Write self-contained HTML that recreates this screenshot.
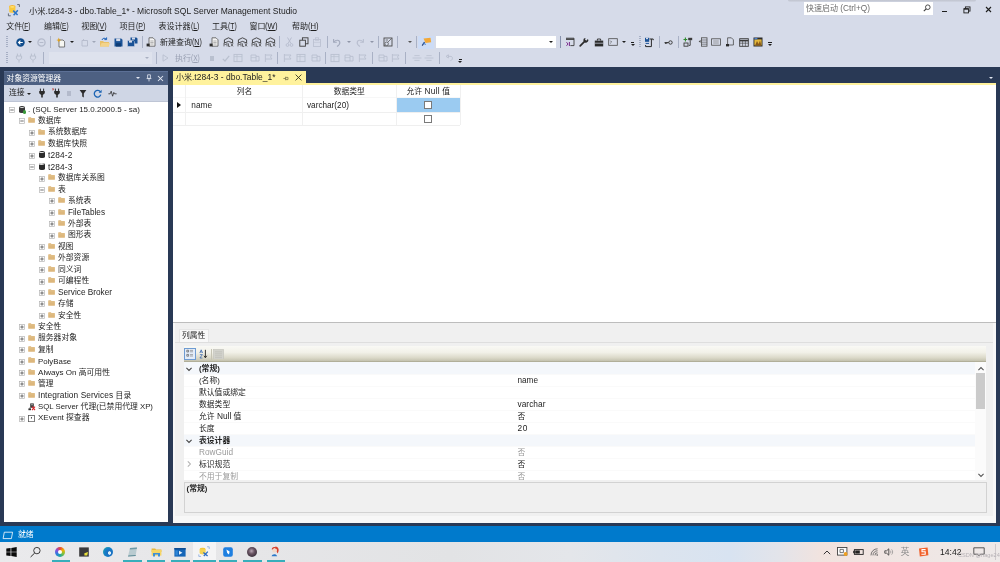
<!DOCTYPE html><html><head><meta charset="utf-8"><title>SSMS</title><style>
*{box-sizing:border-box;margin:0;padding:0}
html,body{width:1000px;height:562px;overflow:hidden;background:#D6DBE9;font-family:"Liberation Sans","Noto Sans CJK SC",sans-serif;font-size:7.8px;color:#1e1e1e}
.a{position:absolute}
.t{position:absolute;white-space:nowrap;line-height:12px;height:12px;z-index:2}
span.l{line-height:0}
#root{position:absolute;left:0;top:0;width:1000px;height:562px;overflow:hidden;will-change:transform;background:#D6DBE9}
#navy{left:0;top:66.8px;width:1000px;height:460.2px;background:#293955}
#status{left:0;top:526.4px;width:1000px;height:15.5px;background:#007ACC}
#taskbar{left:0;top:541.9px;width:1000px;height:20px;background:linear-gradient(90deg,#EAEAEC 0,#E6E6E8 25%,#E2E3E5 45%,#E4E6EA 57%,#DCE4EE 66%,#D8E3F1 73%,#E3E4EA 78%,#F1E3DF 82%,#F0E5E2 88%,#EEE9E8 100%)}
#oe{left:4.3px;top:71px;width:164.2px;height:451.4px;background:#fff}
#oetitle{left:4.3px;top:71px;width:164.2px;height:13.5px;background:#4D6082;border-top:0.7px solid #5C7096}
#oetb{left:4.3px;top:84.5px;width:164.2px;height:17.9px;background:#CFD6E5;border-bottom:0.8px solid #BEC5D5}
#doc{left:173px;top:84px;width:823px;height:438.6px;background:#fff}
#tab{left:173px;top:70.8px;width:133px;height:14px;background:#FFF29D}
#tabline{left:173px;top:83px;width:823px;height:1.5px;background:#FFF29D}
#propsbg{left:173px;top:322px;width:823px;height:200.6px;background:#F7F7F7;border-top:1px solid #bdbdbd}
#props{left:175px;top:323px;width:818px;height:193px;background:#F0F0F0}
</style></head><body><div id="root">
<div class="a" id="navy"></div>
<div class="a" id="oe"></div><div class="a" id="oetitle"></div><div class="a" id="oetb"></div>
<div class="a" id="doc"></div><div class="a" id="tab"></div><div class="a" id="tabline"></div>
<div class="a" id="propsbg"></div><div class="a" id="props"></div>
<div class="a" id="status"></div><div class="a" id="taskbar"></div>
<div class="t " id="t1" style="left:29px;top:5.300000000000001px;font-size:8.3px;color:#1e1e1e">小米<span class="l" style="font-size:1.028em;letter-spacing:0.006px;">.t284-3 - dbo.Table_1* - Microsoft SQL Server Management Studio</span></div>
<div class="t " id="t2" style="left:6.2px;top:20.9px;font-size:8px">文件<span class="l" style="font-size:1.08em;display:inline-block;transform:scaleX(0.761);transform-origin:0 50%;">(<u>F</u>)</span></div>
<div class="t " id="t3" style="left:44px;top:20.9px;font-size:8px">编辑<span class="l" style="font-size:1.08em;display:inline-block;transform:scaleX(0.738);transform-origin:0 50%;">(<u>E</u>)</span></div>
<div class="t " id="t4" style="left:81.2px;top:20.9px;font-size:8px">视图<span class="l" style="font-size:1.08em;display:inline-block;transform:scaleX(0.842);transform-origin:0 50%;">(<u>V</u>)</span></div>
<div class="t " id="t5" style="left:119.6px;top:20.9px;font-size:8px">项目<span class="l" style="font-size:1.08em;display:inline-block;transform:scaleX(0.816);transform-origin:0 50%;">(<u>P</u>)</span></div>
<div class="t " id="t6" style="left:158.5px;top:20.9px;font-size:8px">表设计器<span class="l" style="font-size:1.08em;display:inline-block;transform:scaleX(0.787);transform-origin:0 50%;">(<u>L</u>)</span></div>
<div class="t " id="t7" style="left:211.9px;top:20.9px;font-size:8px">工具<span class="l" style="font-size:1.08em;display:inline-block;transform:scaleX(0.789);transform-origin:0 50%;">(<u>T</u>)</span></div>
<div class="t " id="t8" style="left:249.4px;top:20.9px;font-size:8px">窗口<span class="l" style="font-size:1.08em;display:inline-block;transform:scaleX(0.906);transform-origin:0 50%;">(<u>W</u>)</span></div>
<div class="t " id="t9" style="left:291.9px;top:20.9px;font-size:8px">帮助<span class="l" style="font-size:1.08em;display:inline-block;transform:scaleX(0.884);transform-origin:0 50%;">(<u>H</u>)</span></div>
<div class="t " id="t10" style="left:160px;top:37px;font-size:8px">新建查询<span class="l" style="font-size:1.08em;display:inline-block;transform:scaleX(0.826);transform-origin:0 50%;">(<u>N</u>)</span></div>
<div class="t " id="t11" style="left:175px;top:52.5px;font-size:8px;color:#9aa1b3">执行<span class="l" style="font-size:1.08em;display:inline-block;transform:scaleX(0.764);transform-origin:0 50%;">(<u>X</u>)</span></div>
<div class="t " id="t12" style="left:806px;top:3px;font-size:8px;color:#6d6d6d">快速启动<span class="l" style="font-size:1.036em;letter-spacing:0.009px;"> (Ctrl+Q)</span></div>
<svg class="a" style="left:8.5px;top:106.90px" width="6" height="6" viewBox="0 0 6 6"><rect x="0.4" y="0.4" width="5.2" height="5.2" fill="#fff" stroke="#B4B4B4" stroke-width="0.7"/><path d="M1.3 3 H4.7" stroke="#555" stroke-width="0.85"/></svg>
<div class="a" style="left:19px;top:106.10px;width:6px;height:7px;background:#3a3a3a;border-radius:2.5px/1.5px"></div>
<div class="a" style="left:19.8px;top:106.60px;width:4.4px;height:1.4px;background:#ddd;border-radius:50%"></div>
<div class="a" style="left:22.5px;top:110.10px;width:3.5px;height:3.5px;background:#3A9A3A;border-radius:50%"></div>
<div class="t " id="t13" style="left:28px;top:104.4px;"><span class="l" style="font-size:1.032em;letter-spacing:0.008px;">. (SQL Server 15.0.2000.5 - sa)</span></div>
<svg class="a" style="left:18.5px;top:118.34px" width="6" height="6" viewBox="0 0 6 6"><rect x="0.4" y="0.4" width="5.2" height="5.2" fill="#fff" stroke="#B4B4B4" stroke-width="0.7"/><path d="M1.3 3 H4.7" stroke="#555" stroke-width="0.85"/></svg>
<svg class="a" style="left:28.1px;top:117.14px" width="7" height="6" viewBox="0 0 7 6"><path d="M0.2 0.9 Q0.2 0.3 0.8 0.3 H2.8 L3.5 1 H6.4 Q6.9 1 6.9 1.5 V5.3 Q6.9 5.8 6.4 5.8 H0.7 Q0.2 5.8 0.2 5.3 Z" fill="#DDB77C"/><path d="M0.2 1.9 H6.9" stroke="#E8CC9C" stroke-width="0.5"/></svg>
<div class="t " id="t14" style="left:38px;top:115.04px;">数据库</div>
<svg class="a" style="left:28.5px;top:129.78px" width="6" height="6" viewBox="0 0 6 6"><rect x="0.4" y="0.4" width="5.2" height="5.2" fill="#fff" stroke="#B4B4B4" stroke-width="0.7"/><path d="M1.3 3 H4.7" stroke="#555" stroke-width="0.85"/><path d="M3 1.3 V4.7" stroke="#555" stroke-width="0.85"/></svg>
<svg class="a" style="left:38.1px;top:128.58px" width="7" height="6" viewBox="0 0 7 6"><path d="M0.2 0.9 Q0.2 0.3 0.8 0.3 H2.8 L3.5 1 H6.4 Q6.9 1 6.9 1.5 V5.3 Q6.9 5.8 6.4 5.8 H0.7 Q0.2 5.8 0.2 5.3 Z" fill="#DDB77C"/><path d="M0.2 1.9 H6.9" stroke="#E8CC9C" stroke-width="0.5"/></svg>
<div class="t " id="t15" style="left:48px;top:126.47999999999999px;">系统数据库</div>
<svg class="a" style="left:28.5px;top:141.22px" width="6" height="6" viewBox="0 0 6 6"><rect x="0.4" y="0.4" width="5.2" height="5.2" fill="#fff" stroke="#B4B4B4" stroke-width="0.7"/><path d="M1.3 3 H4.7" stroke="#555" stroke-width="0.85"/><path d="M3 1.3 V4.7" stroke="#555" stroke-width="0.85"/></svg>
<svg class="a" style="left:38.1px;top:140.02px" width="7" height="6" viewBox="0 0 7 6"><path d="M0.2 0.9 Q0.2 0.3 0.8 0.3 H2.8 L3.5 1 H6.4 Q6.9 1 6.9 1.5 V5.3 Q6.9 5.8 6.4 5.8 H0.7 Q0.2 5.8 0.2 5.3 Z" fill="#DDB77C"/><path d="M0.2 1.9 H6.9" stroke="#E8CC9C" stroke-width="0.5"/></svg>
<div class="t " id="t16" style="left:48px;top:137.92px;">数据库快照</div>
<svg class="a" style="left:28.5px;top:152.66px" width="6" height="6" viewBox="0 0 6 6"><rect x="0.4" y="0.4" width="5.2" height="5.2" fill="#fff" stroke="#B4B4B4" stroke-width="0.7"/><path d="M1.3 3 H4.7" stroke="#555" stroke-width="0.85"/><path d="M3 1.3 V4.7" stroke="#555" stroke-width="0.85"/></svg>
<div class="a" style="left:38.5px;top:151.36px;width:6px;height:7px;background:#2b2b2b;border-radius:2.5px/1.5px"></div>
<div class="a" style="left:39.3px;top:151.86px;width:4.4px;height:1.4px;background:#ddd;border-radius:50%"></div>
<div class="t " id="t17" style="left:48px;top:150.16px;"><span class="l" style="font-size:1.070em;letter-spacing:0.146px;">t284-2</span></div>
<svg class="a" style="left:28.5px;top:164.10px" width="6" height="6" viewBox="0 0 6 6"><rect x="0.4" y="0.4" width="5.2" height="5.2" fill="#fff" stroke="#B4B4B4" stroke-width="0.7"/><path d="M1.3 3 H4.7" stroke="#555" stroke-width="0.85"/></svg>
<div class="a" style="left:38.5px;top:162.80px;width:6px;height:7px;background:#2b2b2b;border-radius:2.5px/1.5px"></div>
<div class="a" style="left:39.3px;top:163.30px;width:4.4px;height:1.4px;background:#ddd;border-radius:50%"></div>
<div class="t " id="t18" style="left:48px;top:161.6px;"><span class="l" style="font-size:1.070em;letter-spacing:0.146px;">t284-3</span></div>
<svg class="a" style="left:38.5px;top:175.54px" width="6" height="6" viewBox="0 0 6 6"><rect x="0.4" y="0.4" width="5.2" height="5.2" fill="#fff" stroke="#B4B4B4" stroke-width="0.7"/><path d="M1.3 3 H4.7" stroke="#555" stroke-width="0.85"/><path d="M3 1.3 V4.7" stroke="#555" stroke-width="0.85"/></svg>
<svg class="a" style="left:48.1px;top:174.34px" width="7" height="6" viewBox="0 0 7 6"><path d="M0.2 0.9 Q0.2 0.3 0.8 0.3 H2.8 L3.5 1 H6.4 Q6.9 1 6.9 1.5 V5.3 Q6.9 5.8 6.4 5.8 H0.7 Q0.2 5.8 0.2 5.3 Z" fill="#DDB77C"/><path d="M0.2 1.9 H6.9" stroke="#E8CC9C" stroke-width="0.5"/></svg>
<div class="t " id="t19" style="left:58px;top:172.24px;">数据库关系图</div>
<svg class="a" style="left:38.5px;top:186.98px" width="6" height="6" viewBox="0 0 6 6"><rect x="0.4" y="0.4" width="5.2" height="5.2" fill="#fff" stroke="#B4B4B4" stroke-width="0.7"/><path d="M1.3 3 H4.7" stroke="#555" stroke-width="0.85"/></svg>
<svg class="a" style="left:48.1px;top:185.78px" width="7" height="6" viewBox="0 0 7 6"><path d="M0.2 0.9 Q0.2 0.3 0.8 0.3 H2.8 L3.5 1 H6.4 Q6.9 1 6.9 1.5 V5.3 Q6.9 5.8 6.4 5.8 H0.7 Q0.2 5.8 0.2 5.3 Z" fill="#DDB77C"/><path d="M0.2 1.9 H6.9" stroke="#E8CC9C" stroke-width="0.5"/></svg>
<div class="t " id="t20" style="left:58px;top:183.68px;">表</div>
<svg class="a" style="left:48.5px;top:198.42px" width="6" height="6" viewBox="0 0 6 6"><rect x="0.4" y="0.4" width="5.2" height="5.2" fill="#fff" stroke="#B4B4B4" stroke-width="0.7"/><path d="M1.3 3 H4.7" stroke="#555" stroke-width="0.85"/><path d="M3 1.3 V4.7" stroke="#555" stroke-width="0.85"/></svg>
<svg class="a" style="left:58.1px;top:197.22px" width="7" height="6" viewBox="0 0 7 6"><path d="M0.2 0.9 Q0.2 0.3 0.8 0.3 H2.8 L3.5 1 H6.4 Q6.9 1 6.9 1.5 V5.3 Q6.9 5.8 6.4 5.8 H0.7 Q0.2 5.8 0.2 5.3 Z" fill="#DDB77C"/><path d="M0.2 1.9 H6.9" stroke="#E8CC9C" stroke-width="0.5"/></svg>
<div class="t " id="t21" style="left:68px;top:195.12px;">系统表</div>
<svg class="a" style="left:48.5px;top:209.86px" width="6" height="6" viewBox="0 0 6 6"><rect x="0.4" y="0.4" width="5.2" height="5.2" fill="#fff" stroke="#B4B4B4" stroke-width="0.7"/><path d="M1.3 3 H4.7" stroke="#555" stroke-width="0.85"/><path d="M3 1.3 V4.7" stroke="#555" stroke-width="0.85"/></svg>
<svg class="a" style="left:58.1px;top:208.66px" width="7" height="6" viewBox="0 0 7 6"><path d="M0.2 0.9 Q0.2 0.3 0.8 0.3 H2.8 L3.5 1 H6.4 Q6.9 1 6.9 1.5 V5.3 Q6.9 5.8 6.4 5.8 H0.7 Q0.2 5.8 0.2 5.3 Z" fill="#DDB77C"/><path d="M0.2 1.9 H6.9" stroke="#E8CC9C" stroke-width="0.5"/></svg>
<div class="t " id="t22" style="left:68px;top:207.36px;"><span class="l" style="font-size:1.054em;">FileTables</span></div>
<svg class="a" style="left:48.5px;top:221.30px" width="6" height="6" viewBox="0 0 6 6"><rect x="0.4" y="0.4" width="5.2" height="5.2" fill="#fff" stroke="#B4B4B4" stroke-width="0.7"/><path d="M1.3 3 H4.7" stroke="#555" stroke-width="0.85"/><path d="M3 1.3 V4.7" stroke="#555" stroke-width="0.85"/></svg>
<svg class="a" style="left:58.1px;top:220.10px" width="7" height="6" viewBox="0 0 7 6"><path d="M0.2 0.9 Q0.2 0.3 0.8 0.3 H2.8 L3.5 1 H6.4 Q6.9 1 6.9 1.5 V5.3 Q6.9 5.8 6.4 5.8 H0.7 Q0.2 5.8 0.2 5.3 Z" fill="#DDB77C"/><path d="M0.2 1.9 H6.9" stroke="#E8CC9C" stroke-width="0.5"/></svg>
<div class="t " id="t23" style="left:68px;top:218.0px;">外部表</div>
<svg class="a" style="left:48.5px;top:232.74px" width="6" height="6" viewBox="0 0 6 6"><rect x="0.4" y="0.4" width="5.2" height="5.2" fill="#fff" stroke="#B4B4B4" stroke-width="0.7"/><path d="M1.3 3 H4.7" stroke="#555" stroke-width="0.85"/><path d="M3 1.3 V4.7" stroke="#555" stroke-width="0.85"/></svg>
<svg class="a" style="left:58.1px;top:231.54px" width="7" height="6" viewBox="0 0 7 6"><path d="M0.2 0.9 Q0.2 0.3 0.8 0.3 H2.8 L3.5 1 H6.4 Q6.9 1 6.9 1.5 V5.3 Q6.9 5.8 6.4 5.8 H0.7 Q0.2 5.8 0.2 5.3 Z" fill="#DDB77C"/><path d="M0.2 1.9 H6.9" stroke="#E8CC9C" stroke-width="0.5"/></svg>
<div class="t " id="t24" style="left:68px;top:229.44px;">图形表</div>
<svg class="a" style="left:38.5px;top:244.18px" width="6" height="6" viewBox="0 0 6 6"><rect x="0.4" y="0.4" width="5.2" height="5.2" fill="#fff" stroke="#B4B4B4" stroke-width="0.7"/><path d="M1.3 3 H4.7" stroke="#555" stroke-width="0.85"/><path d="M3 1.3 V4.7" stroke="#555" stroke-width="0.85"/></svg>
<svg class="a" style="left:48.1px;top:242.98px" width="7" height="6" viewBox="0 0 7 6"><path d="M0.2 0.9 Q0.2 0.3 0.8 0.3 H2.8 L3.5 1 H6.4 Q6.9 1 6.9 1.5 V5.3 Q6.9 5.8 6.4 5.8 H0.7 Q0.2 5.8 0.2 5.3 Z" fill="#DDB77C"/><path d="M0.2 1.9 H6.9" stroke="#E8CC9C" stroke-width="0.5"/></svg>
<div class="t " id="t25" style="left:58px;top:240.88px;">视图</div>
<svg class="a" style="left:38.5px;top:255.62px" width="6" height="6" viewBox="0 0 6 6"><rect x="0.4" y="0.4" width="5.2" height="5.2" fill="#fff" stroke="#B4B4B4" stroke-width="0.7"/><path d="M1.3 3 H4.7" stroke="#555" stroke-width="0.85"/><path d="M3 1.3 V4.7" stroke="#555" stroke-width="0.85"/></svg>
<svg class="a" style="left:48.1px;top:254.42px" width="7" height="6" viewBox="0 0 7 6"><path d="M0.2 0.9 Q0.2 0.3 0.8 0.3 H2.8 L3.5 1 H6.4 Q6.9 1 6.9 1.5 V5.3 Q6.9 5.8 6.4 5.8 H0.7 Q0.2 5.8 0.2 5.3 Z" fill="#DDB77C"/><path d="M0.2 1.9 H6.9" stroke="#E8CC9C" stroke-width="0.5"/></svg>
<div class="t " id="t26" style="left:58px;top:252.32px;">外部资源</div>
<svg class="a" style="left:38.5px;top:267.06px" width="6" height="6" viewBox="0 0 6 6"><rect x="0.4" y="0.4" width="5.2" height="5.2" fill="#fff" stroke="#B4B4B4" stroke-width="0.7"/><path d="M1.3 3 H4.7" stroke="#555" stroke-width="0.85"/><path d="M3 1.3 V4.7" stroke="#555" stroke-width="0.85"/></svg>
<svg class="a" style="left:48.1px;top:265.86px" width="7" height="6" viewBox="0 0 7 6"><path d="M0.2 0.9 Q0.2 0.3 0.8 0.3 H2.8 L3.5 1 H6.4 Q6.9 1 6.9 1.5 V5.3 Q6.9 5.8 6.4 5.8 H0.7 Q0.2 5.8 0.2 5.3 Z" fill="#DDB77C"/><path d="M0.2 1.9 H6.9" stroke="#E8CC9C" stroke-width="0.5"/></svg>
<div class="t " id="t27" style="left:58px;top:263.76px;">同义词</div>
<svg class="a" style="left:38.5px;top:278.50px" width="6" height="6" viewBox="0 0 6 6"><rect x="0.4" y="0.4" width="5.2" height="5.2" fill="#fff" stroke="#B4B4B4" stroke-width="0.7"/><path d="M1.3 3 H4.7" stroke="#555" stroke-width="0.85"/><path d="M3 1.3 V4.7" stroke="#555" stroke-width="0.85"/></svg>
<svg class="a" style="left:48.1px;top:277.30px" width="7" height="6" viewBox="0 0 7 6"><path d="M0.2 0.9 Q0.2 0.3 0.8 0.3 H2.8 L3.5 1 H6.4 Q6.9 1 6.9 1.5 V5.3 Q6.9 5.8 6.4 5.8 H0.7 Q0.2 5.8 0.2 5.3 Z" fill="#DDB77C"/><path d="M0.2 1.9 H6.9" stroke="#E8CC9C" stroke-width="0.5"/></svg>
<div class="t " id="t28" style="left:58px;top:275.2px;">可编程性</div>
<svg class="a" style="left:38.5px;top:289.94px" width="6" height="6" viewBox="0 0 6 6"><rect x="0.4" y="0.4" width="5.2" height="5.2" fill="#fff" stroke="#B4B4B4" stroke-width="0.7"/><path d="M1.3 3 H4.7" stroke="#555" stroke-width="0.85"/><path d="M3 1.3 V4.7" stroke="#555" stroke-width="0.85"/></svg>
<svg class="a" style="left:48.1px;top:288.74px" width="7" height="6" viewBox="0 0 7 6"><path d="M0.2 0.9 Q0.2 0.3 0.8 0.3 H2.8 L3.5 1 H6.4 Q6.9 1 6.9 1.5 V5.3 Q6.9 5.8 6.4 5.8 H0.7 Q0.2 5.8 0.2 5.3 Z" fill="#DDB77C"/><path d="M0.2 1.9 H6.9" stroke="#E8CC9C" stroke-width="0.5"/></svg>
<div class="t " id="t29" style="left:58px;top:287.44px;"><span class="l" style="font-size:1.056em;letter-spacing:0.007px;">Service Broker</span></div>
<svg class="a" style="left:38.5px;top:301.38px" width="6" height="6" viewBox="0 0 6 6"><rect x="0.4" y="0.4" width="5.2" height="5.2" fill="#fff" stroke="#B4B4B4" stroke-width="0.7"/><path d="M1.3 3 H4.7" stroke="#555" stroke-width="0.85"/><path d="M3 1.3 V4.7" stroke="#555" stroke-width="0.85"/></svg>
<svg class="a" style="left:48.1px;top:300.18px" width="7" height="6" viewBox="0 0 7 6"><path d="M0.2 0.9 Q0.2 0.3 0.8 0.3 H2.8 L3.5 1 H6.4 Q6.9 1 6.9 1.5 V5.3 Q6.9 5.8 6.4 5.8 H0.7 Q0.2 5.8 0.2 5.3 Z" fill="#DDB77C"/><path d="M0.2 1.9 H6.9" stroke="#E8CC9C" stroke-width="0.5"/></svg>
<div class="t " id="t30" style="left:58px;top:298.08px;">存储</div>
<svg class="a" style="left:38.5px;top:312.82px" width="6" height="6" viewBox="0 0 6 6"><rect x="0.4" y="0.4" width="5.2" height="5.2" fill="#fff" stroke="#B4B4B4" stroke-width="0.7"/><path d="M1.3 3 H4.7" stroke="#555" stroke-width="0.85"/><path d="M3 1.3 V4.7" stroke="#555" stroke-width="0.85"/></svg>
<svg class="a" style="left:48.1px;top:311.62px" width="7" height="6" viewBox="0 0 7 6"><path d="M0.2 0.9 Q0.2 0.3 0.8 0.3 H2.8 L3.5 1 H6.4 Q6.9 1 6.9 1.5 V5.3 Q6.9 5.8 6.4 5.8 H0.7 Q0.2 5.8 0.2 5.3 Z" fill="#DDB77C"/><path d="M0.2 1.9 H6.9" stroke="#E8CC9C" stroke-width="0.5"/></svg>
<div class="t " id="t31" style="left:58px;top:309.52px;">安全性</div>
<svg class="a" style="left:18.5px;top:324.26px" width="6" height="6" viewBox="0 0 6 6"><rect x="0.4" y="0.4" width="5.2" height="5.2" fill="#fff" stroke="#B4B4B4" stroke-width="0.7"/><path d="M1.3 3 H4.7" stroke="#555" stroke-width="0.85"/><path d="M3 1.3 V4.7" stroke="#555" stroke-width="0.85"/></svg>
<svg class="a" style="left:28.1px;top:323.06px" width="7" height="6" viewBox="0 0 7 6"><path d="M0.2 0.9 Q0.2 0.3 0.8 0.3 H2.8 L3.5 1 H6.4 Q6.9 1 6.9 1.5 V5.3 Q6.9 5.8 6.4 5.8 H0.7 Q0.2 5.8 0.2 5.3 Z" fill="#DDB77C"/><path d="M0.2 1.9 H6.9" stroke="#E8CC9C" stroke-width="0.5"/></svg>
<div class="t " id="t32" style="left:38px;top:320.96px;">安全性</div>
<svg class="a" style="left:18.5px;top:335.70px" width="6" height="6" viewBox="0 0 6 6"><rect x="0.4" y="0.4" width="5.2" height="5.2" fill="#fff" stroke="#B4B4B4" stroke-width="0.7"/><path d="M1.3 3 H4.7" stroke="#555" stroke-width="0.85"/><path d="M3 1.3 V4.7" stroke="#555" stroke-width="0.85"/></svg>
<svg class="a" style="left:28.1px;top:334.50px" width="7" height="6" viewBox="0 0 7 6"><path d="M0.2 0.9 Q0.2 0.3 0.8 0.3 H2.8 L3.5 1 H6.4 Q6.9 1 6.9 1.5 V5.3 Q6.9 5.8 6.4 5.8 H0.7 Q0.2 5.8 0.2 5.3 Z" fill="#DDB77C"/><path d="M0.2 1.9 H6.9" stroke="#E8CC9C" stroke-width="0.5"/></svg>
<div class="t " id="t33" style="left:38px;top:332.4px;">服务器对象</div>
<svg class="a" style="left:18.5px;top:347.14px" width="6" height="6" viewBox="0 0 6 6"><rect x="0.4" y="0.4" width="5.2" height="5.2" fill="#fff" stroke="#B4B4B4" stroke-width="0.7"/><path d="M1.3 3 H4.7" stroke="#555" stroke-width="0.85"/><path d="M3 1.3 V4.7" stroke="#555" stroke-width="0.85"/></svg>
<svg class="a" style="left:28.1px;top:345.94px" width="7" height="6" viewBox="0 0 7 6"><path d="M0.2 0.9 Q0.2 0.3 0.8 0.3 H2.8 L3.5 1 H6.4 Q6.9 1 6.9 1.5 V5.3 Q6.9 5.8 6.4 5.8 H0.7 Q0.2 5.8 0.2 5.3 Z" fill="#DDB77C"/><path d="M0.2 1.9 H6.9" stroke="#E8CC9C" stroke-width="0.5"/></svg>
<div class="t " id="t34" style="left:38px;top:343.84px;">复制</div>
<svg class="a" style="left:18.5px;top:358.58px" width="6" height="6" viewBox="0 0 6 6"><rect x="0.4" y="0.4" width="5.2" height="5.2" fill="#fff" stroke="#B4B4B4" stroke-width="0.7"/><path d="M1.3 3 H4.7" stroke="#555" stroke-width="0.85"/><path d="M3 1.3 V4.7" stroke="#555" stroke-width="0.85"/></svg>
<svg class="a" style="left:28.1px;top:357.38px" width="7" height="6" viewBox="0 0 7 6"><path d="M0.2 0.9 Q0.2 0.3 0.8 0.3 H2.8 L3.5 1 H6.4 Q6.9 1 6.9 1.5 V5.3 Q6.9 5.8 6.4 5.8 H0.7 Q0.2 5.8 0.2 5.3 Z" fill="#DDB77C"/><path d="M0.2 1.9 H6.9" stroke="#E8CC9C" stroke-width="0.5"/></svg>
<div class="t " id="t35" style="left:38px;top:356.08px;"><span class="l" style="font-size:1.007em;letter-spacing:0.007px;">PolyBase</span></div>
<svg class="a" style="left:18.5px;top:370.02px" width="6" height="6" viewBox="0 0 6 6"><rect x="0.4" y="0.4" width="5.2" height="5.2" fill="#fff" stroke="#B4B4B4" stroke-width="0.7"/><path d="M1.3 3 H4.7" stroke="#555" stroke-width="0.85"/><path d="M3 1.3 V4.7" stroke="#555" stroke-width="0.85"/></svg>
<svg class="a" style="left:28.1px;top:368.82px" width="7" height="6" viewBox="0 0 7 6"><path d="M0.2 0.9 Q0.2 0.3 0.8 0.3 H2.8 L3.5 1 H6.4 Q6.9 1 6.9 1.5 V5.3 Q6.9 5.8 6.4 5.8 H0.7 Q0.2 5.8 0.2 5.3 Z" fill="#DDB77C"/><path d="M0.2 1.9 H6.9" stroke="#E8CC9C" stroke-width="0.5"/></svg>
<div class="t " id="t36" style="left:38px;top:366.72px;"><span class="l" style="font-size:1.035em;">Always On </span>高可用性</div>
<svg class="a" style="left:18.5px;top:381.46px" width="6" height="6" viewBox="0 0 6 6"><rect x="0.4" y="0.4" width="5.2" height="5.2" fill="#fff" stroke="#B4B4B4" stroke-width="0.7"/><path d="M1.3 3 H4.7" stroke="#555" stroke-width="0.85"/><path d="M3 1.3 V4.7" stroke="#555" stroke-width="0.85"/></svg>
<svg class="a" style="left:28.1px;top:380.26px" width="7" height="6" viewBox="0 0 7 6"><path d="M0.2 0.9 Q0.2 0.3 0.8 0.3 H2.8 L3.5 1 H6.4 Q6.9 1 6.9 1.5 V5.3 Q6.9 5.8 6.4 5.8 H0.7 Q0.2 5.8 0.2 5.3 Z" fill="#DDB77C"/><path d="M0.2 1.9 H6.9" stroke="#E8CC9C" stroke-width="0.5"/></svg>
<div class="t " id="t37" style="left:38px;top:378.16px;">管理</div>
<svg class="a" style="left:18.5px;top:392.90px" width="6" height="6" viewBox="0 0 6 6"><rect x="0.4" y="0.4" width="5.2" height="5.2" fill="#fff" stroke="#B4B4B4" stroke-width="0.7"/><path d="M1.3 3 H4.7" stroke="#555" stroke-width="0.85"/><path d="M3 1.3 V4.7" stroke="#555" stroke-width="0.85"/></svg>
<svg class="a" style="left:28.1px;top:391.70px" width="7" height="6" viewBox="0 0 7 6"><path d="M0.2 0.9 Q0.2 0.3 0.8 0.3 H2.8 L3.5 1 H6.4 Q6.9 1 6.9 1.5 V5.3 Q6.9 5.8 6.4 5.8 H0.7 Q0.2 5.8 0.2 5.3 Z" fill="#DDB77C"/><path d="M0.2 1.9 H6.9" stroke="#E8CC9C" stroke-width="0.5"/></svg>
<div class="t " id="t38" style="left:38px;top:389.6px;"><span class="l" style="font-size:1.070em;letter-spacing:0.080px;">Integration Services </span>目录</div>
<svg class="a" style="left:27.9px;top:403.44px" width="8" height="8" viewBox="0 0 8 8"><rect x="2.2" y="0.4" width="3.6" height="4.4" fill="#3a3a3a"/><rect x="3" y="1.1" width="2" height="1.2" fill="#9a9a9a"/><path d="M0.4 5.4 H3 V7.2 H0.4 Z" fill="#333"/><path d="M1.7 4.6 V5.6" stroke="#333" stroke-width="0.7"/><path d="M4 3.6 L7 7.2 M7 3.6 L4 7.2" stroke="#D8282C" stroke-width="1.1"/></svg>
<div class="t " id="t39" style="left:38px;top:401.04px;"><span class="l" style="">SQL Server </span>代理<span class="l" style="">(</span>已禁用代理<span class="l" style=""> XP)</span></div>
<svg class="a" style="left:18.5px;top:415.78px" width="6" height="6" viewBox="0 0 6 6"><rect x="0.4" y="0.4" width="5.2" height="5.2" fill="#fff" stroke="#B4B4B4" stroke-width="0.7"/><path d="M1.3 3 H4.7" stroke="#555" stroke-width="0.85"/><path d="M3 1.3 V4.7" stroke="#555" stroke-width="0.85"/></svg>
<svg class="a" style="left:28.1px;top:414.68px" width="7" height="7.4" viewBox="0 0 7 7.4"><rect x="0.5" y="0.5" width="5.9" height="6.2" fill="#fff" stroke="#5a5a5a" stroke-width="0.8"/><path d="M3.45 2 V3.6" stroke="#333" stroke-width="0.9"/></svg>
<div class="t " id="t40" style="left:38px;top:412.48px;"><span class="l" style="font-size:1.029em;">XEvent </span>探查器</div>
<div class="t " id="t41" style="left:6.6px;top:73px;color:#fff;font-size:7.8px">对象资源管理器</div>
<div class="t " id="t42" style="left:9px;top:87.4px;font-size:7.8px">连接</div>
<div class="t " id="t43" style="left:176px;top:72px;font-size:8px">小米<span class="l" style="font-size:1.061em;letter-spacing:0.007px;">.t284-3 - dbo.Table_1*</span></div>
<div class="a" style="left:173px;top:97.4px;width:287px;height:0.7px;background:#F7F7F7;"></div>
<div class="a" style="left:173px;top:111.5px;width:287px;height:0.8px;background:#EFEFEF;"></div>
<div class="a" style="left:173px;top:125.3px;width:287px;height:0.8px;background:#EFEFEF;"></div>
<div class="a" style="left:185px;top:85px;width:0.8px;height:40px;background:#F0F0F0;"></div>
<div class="a" style="left:302px;top:85px;width:0.8px;height:40px;background:#F0F0F0;"></div>
<div class="a" style="left:396px;top:85px;width:0.8px;height:40px;background:#F0F0F0;"></div>
<div class="a" style="left:459.5px;top:85px;width:0.8px;height:40px;background:#F0F0F0;"></div>
<div class="a" style="left:396.6px;top:98.2px;width:63px;height:13.4px;background:#9BCBF1;"></div>
<div class="t " id="t44" style="left:144.5px;width:200px;text-align:center;top:86.1px;">列名</div>
<div class="t " id="t45" style="left:249.3px;width:200px;text-align:center;top:86.1px;">数据类型</div>
<div class="t " id="t46" style="left:406.5px;top:86.1px;">允许<span class="l" style="font-size:1.070em;letter-spacing:0.188px;"> Null </span>值</div>
<div class="t " id="t47" style="left:191.3px;top:99.8px;"><span class="l" style="font-size:1.061em;">name</span></div>
<div class="t " id="t48" style="left:307px;top:99.8px;"><span class="l" style="font-size:1.053em;">varchar(20)</span></div>
<div class="a" style="left:177px;top:101.9px;width:0;height:0;border-left:4.2px solid #111;border-top:3.1px solid transparent;border-bottom:3.1px solid transparent"></div>
<div class="a" style="left:424px;top:101.2px;width:8.2px;height:8.2px;background:#fff;border:0.9px solid #7a7a7a"></div>
<div class="a" style="left:424px;top:114.7px;width:8.2px;height:8.2px;background:#fff;border:0.9px solid #7a7a7a"></div>
<div class="a" style="left:178.6px;top:329px;width:30.4px;height:14px;background:#F8F8F8;border:0.7px solid #e6e6e6;border-bottom:none"></div>
<div class="a" style="left:175px;top:342.3px;width:818px;height:0.7px;background:#dedede;"></div>
<div class="t " id="t49" style="left:182px;top:329.6px;">列属性</div>
<div class="a" style="left:184px;top:346px;width:802px;height:15.6px;background:linear-gradient(180deg,#F9F9F5 0,#F2F1E8 40%,#DCDACA 72%,#C6C4B1 92%,#A3A189 100%)"></div>
<div class="a" style="left:184px;top:361.5px;width:802px;height:118.5px;background:#fff;"></div>
<div class="a" style="left:184px;top:362px;width:791px;height:12px;background:#F4F7FB;"></div>
<div class="a" style="left:184px;top:434px;width:791px;height:12px;background:#F4F7FB;"></div>
<div class="a" style="left:184px;top:373.7px;width:791px;height:0.6px;background:#FAFAFA;"></div>
<div class="a" style="left:184px;top:385.7px;width:791px;height:0.6px;background:#FAFAFA;"></div>
<div class="a" style="left:184px;top:397.7px;width:791px;height:0.6px;background:#FAFAFA;"></div>
<div class="a" style="left:184px;top:409.7px;width:791px;height:0.6px;background:#FAFAFA;"></div>
<div class="a" style="left:184px;top:421.7px;width:791px;height:0.6px;background:#FAFAFA;"></div>
<div class="a" style="left:184px;top:433.7px;width:791px;height:0.6px;background:#FAFAFA;"></div>
<div class="a" style="left:184px;top:445.7px;width:791px;height:0.6px;background:#FAFAFA;"></div>
<div class="a" style="left:184px;top:457.7px;width:791px;height:0.6px;background:#FAFAFA;"></div>
<div class="a" style="left:184px;top:469.7px;width:791px;height:0.6px;background:#FAFAFA;"></div>
<div class="a" style="left:975px;top:362px;width:11px;height:118px;background:#FBFBFB;"></div>
<div class="a" style="left:976.3px;top:373.2px;width:8.4px;height:35.6px;background:#CBCBCB;"></div>
<div class="a" style="left:184px;top:361.5px;width:791px;height:118.3px;overflow:hidden">
<div class="t " id="t50" style="left:15px;top:1.0px;font-weight:bold;">(常规)</div>
<div class="t " id="t51" style="left:15px;top:13.0px;">(名称)</div>
<div class="t " id="t52" style="left:333.5px;top:13.8px;"><span class="l" style="font-size:1.050em;">name</span></div>
<div class="t " id="t53" style="left:15px;top:25.0px;">默认值或绑定</div>
<div class="t " id="t54" style="left:15px;top:37.0px;">数据类型</div>
<div class="t " id="t55" style="left:333.5px;top:37.8px;"><span class="l" style="font-size:1.070em;letter-spacing:0.031px;">varchar</span></div>
<div class="t " id="t56" style="left:15px;top:49.0px;">允许<span class="l" style="font-size:1.070em;"> Null </span>值</div>
<div class="t " id="t57" style="left:333.5px;top:49.0px;">否</div>
<div class="t " id="t58" style="left:15px;top:61.0px;">长度</div>
<div class="t " id="t59" style="left:333.5px;top:61.8px;"><span class="l" style="font-size:1.070em;letter-spacing:0.617px;">20</span></div>
<div class="t " id="t60" style="left:15px;top:73.0px;font-weight:bold;">表设计器</div>
<div class="t " id="t61" style="left:15px;top:85.8px;color:#9a9a9a;"><span class="l" style="font-size:1.060em;letter-spacing:0.009px;">RowGuid</span></div>
<div class="t " id="t62" style="left:333.5px;top:85.0px;color:#9a9a9a;">否</div>
<div class="t " id="t63" style="left:15px;top:97.0px;">标识规范</div>
<div class="t " id="t64" style="left:333.5px;top:97.0px;">否</div>
<div class="t " id="t65" style="left:15px;top:109.0px;color:#9a9a9a;">不用于复制</div>
<div class="t " id="t66" style="left:333.5px;top:109.0px;color:#9a9a9a;">否</div>
</div>
<svg class="a" style="left:185px;top:364.7px" width="8" height="8" viewBox="0 0 8 8"><path d="M1.4 2.8 L4 5.4 L6.6 2.8" fill="none" stroke="#444" stroke-width="1.05" transform="rotate(0 4 4)"/></svg>
<svg class="a" style="left:185px;top:436.7px" width="8" height="8" viewBox="0 0 8 8"><path d="M1.4 2.8 L4 5.4 L6.6 2.8" fill="none" stroke="#444" stroke-width="1.05" transform="rotate(0 4 4)"/></svg>
<svg class="a" style="left:185.4px;top:460.3px" width="8" height="8" viewBox="0 0 8 8"><path d="M1.4 2.8 L4 5.4 L6.6 2.8" fill="none" stroke="#b0b0b0" stroke-width="1.05" transform="rotate(-90 4 4)"/></svg>
<svg class="a" style="left:976.5px;top:364.5px" width="8" height="8" viewBox="0 0 8 8"><path d="M1.4 2.8 L4 5.4 L6.6 2.8" fill="none" stroke="#555" stroke-width="1.05" transform="rotate(180 4 4)"/></svg>
<svg class="a" style="left:976.5px;top:470.5px" width="8" height="8" viewBox="0 0 8 8"><path d="M1.4 2.8 L4 5.4 L6.6 2.8" fill="none" stroke="#555" stroke-width="1.05" transform="rotate(0 4 4)"/></svg>
<div class="a" style="left:184px;top:482px;width:802.5px;height:30.5px;background:#F0F0F0;border:0.8px solid #d2d2d2"></div>
<div class="t " id="t67" style="left:186.6px;top:483px;font-weight:bold">(常规)</div>
<div class="t " id="t68" style="left:18px;top:529.3px;color:#fff;font-size:7.8px">就绪</div>
<svg class="a" style="left:2px;top:530.5px" width="12" height="9" viewBox="0 0 12 9"><path d="M2.3 1.2 H10.6 L9.4 7.6 H1.1 Z" fill="none" stroke="#fff" stroke-width="0.8"/></svg>
<div class="t " id="t69" style="left:940px;top:546.3px;font-size:8.6px;color:#222"><span class="l" style="">14:42</span></div>
<svg class="a" style="left:7.0px;top:3.3000000000000007px" width="14" height="14" viewBox="0 0 14 14"><ellipse cx="5.3" cy="3.6" rx="3.1" ry="1.5" fill="#F8B62E"/><path d="M2.2 3.6 V8.2 A3.1 1.5 0 0 0 8.4 8.2 V3.6 Z" fill="#F9C83C"/><ellipse cx="5.3" cy="3.8" rx="2.2" ry="0.9" fill="#FFE070"/><path d="M6.2 7.6 L10.6 12 M10.8 7.2 L6.6 12.2" stroke="#2B74C8" stroke-width="1.5"/><path d="M10.2 1.6 H12.4 V4" stroke="#59616e" stroke-width="0.9" fill="none"/><path d="M1.4 10.4 V12.8 H3.8" stroke="#59616e" stroke-width="0.9" fill="none"/></svg>
<div class="a" style="left:6.3px;top:36px;width:2px;height:12px;background:repeating-linear-gradient(180deg,#9AA3BA 0,#9AA3BA 1px,transparent 1px,transparent 2px);opacity:.8"></div>
<svg class="a" style="left:15.5px;top:37.5px" width="9" height="9" viewBox="0 0 9 9"><circle cx="4.5" cy="4.5" r="4.2" fill="#0F4C8C"/><path d="M6.8 4.5 H2.6 M4.4 2.6 L2.5 4.5 L4.4 6.4" stroke="#fff" stroke-width="1.1" fill="none"/></svg>
<div class="a" style="left:28.400000000000002px;top:41.1px;width:0;height:0;border-top:2.3px solid #1e1e1e;border-left:2.2px solid transparent;border-right:2.2px solid transparent"></div>
<svg class="a" style="left:36.5px;top:37.5px" width="9" height="9" viewBox="0 0 9 9"><circle cx="4.5" cy="4.5" r="3.6" fill="none" stroke="#B4BACB" stroke-width="1.3"/><path d="M2.5 4.5 H6.4" stroke="#B4BACB" stroke-width="1"/></svg>
<div class="a" style="left:50.2px;top:36.0px;width:0.8px;height:12px;background:#A9B1C5;"></div>
<svg class="a" style="left:55.6px;top:36.5px" width="10" height="11" viewBox="0 0 10 11"><path d="M3 3 H7 L8.6 4.6 V10 H3 Z" fill="#F7F7F2" stroke="#5a5a5a" stroke-width="0.8"/><path d="M2.8 0.6 L3.5 2.4 L5.3 3 L3.5 3.7 L2.8 5.5 L2.1 3.7 L0.3 3 L2.1 2.4 Z" fill="#E2A21C"/></svg>
<div class="a" style="left:69.8px;top:41.1px;width:0;height:0;border-top:2.3px solid #1e1e1e;border-left:2.2px solid transparent;border-right:2.2px solid transparent"></div>
<svg class="a" style="left:79.5px;top:37.5px" width="9" height="9" viewBox="0 0 9 9"><path d="M2 2.5 H7.5 V8 H2 Z M3.5 1 V2.5" fill="none" stroke="#B4BACB" stroke-width="0.9"/></svg>
<div class="a" style="left:91.8px;top:41.1px;width:0;height:0;border-top:2.3px solid #A0A7B8;border-left:2.2px solid transparent;border-right:2.2px solid transparent"></div>
<svg class="a" style="left:98.5px;top:37.0px" width="11" height="10" viewBox="0 0 11 10"><path d="M1 4 H4 L5 5 H10 V9.5 H1 Z" fill="#E9C16A"/><path d="M1 9.5 L2.6 6 H11 L9.6 9.5 Z" fill="#F3D38A"/><path d="M3 3 C3.5 1 6 0.6 7.2 2.2 M7.6 0.4 V2.6 H5.4" stroke="#1D62B8" stroke-width="1" fill="none"/></svg>
<svg class="a" style="left:113.5px;top:37.5px" width="9" height="9" viewBox="0 0 9 9"><path d="M0.5 0.5 H7.2 L8.5 1.8 V8.5 H0.5 Z" fill="#1A5296"/><rect x="2.2" y="0.5" width="4" height="2.6" fill="#D6DBE9"/><rect x="2" y="5.2" width="5" height="3.3" fill="#0F3D75"/></svg>
<svg class="a" style="left:127.0px;top:37.0px" width="11" height="10" viewBox="0 0 11 10"><path d="M3.5 0.5 H9.4 L10.5 1.6 V6.5 H3.5 Z" fill="#1A5296"/><rect x="5" y="0.5" width="3" height="2" fill="#D6DBE9"/><path d="M0.5 3.5 H6.4 L7.5 4.6 V9.5 H0.5 Z" fill="#1A5296" stroke="#D6DBE9" stroke-width="0.5"/><rect x="2" y="3.6" width="3" height="2" fill="#D6DBE9"/></svg>
<div class="a" style="left:141.6px;top:36.0px;width:0.8px;height:12px;background:#A9B1C5;"></div>
<svg class="a" style="left:146.0px;top:37.0px" width="10" height="10" viewBox="0 0 10 10"><path d="M3 0.8 H7 L9 2.8 V9.2 H3 Z" fill="#F4F4F4" stroke="#555" stroke-width="0.8"/><path d="M4.3 4 H7.6 M4.3 5.5 H7.6 M4.3 7 H7.6" stroke="#888" stroke-width="0.6"/><rect x="0.6" y="6.6" width="3" height="2.8" fill="#2b2b2b"/></svg>
<svg class="a" style="left:208.5px;top:37.0px" width="10" height="10" viewBox="0 0 10 10"><path d="M3 0.8 H7 L9 2.8 V9.2 H3 Z" fill="#F4F4F4" stroke="#555" stroke-width="0.8"/><path d="M4.3 4 H7.6 M4.3 5.5 H7.6 M4.3 7 H7.6" stroke="#888" stroke-width="0.6"/><rect x="0.6" y="6.6" width="3" height="2.8" fill="#2b2b2b"/></svg>
<svg class="a" style="left:222.5px;top:37.0px" width="11" height="10" viewBox="0 0 11 10"><path d="M5.5 0.8 L9.6 2.8 V6 L5.5 4.4 L1.4 6 V2.8 Z" fill="none" stroke="#3a3a3a" stroke-width="0.9"/><path d="M1 9.4 V6.4 L2.5 8 L4 6.4 V9.4 M5.5 6.4 V9.4 H7 M8 6.4 L10 9.4 M10 6.4 L8 9.4" stroke="#3a3a3a" stroke-width="0.7" fill="none"/></svg>
<svg class="a" style="left:236.8px;top:37.0px" width="11" height="10" viewBox="0 0 11 10"><path d="M5.5 0.8 L9.6 2.8 V6 L5.5 4.4 L1.4 6 V2.8 Z" fill="none" stroke="#3a3a3a" stroke-width="0.9"/><path d="M1 9.4 V6.4 L2.5 8 L4 6.4 V9.4 M5.5 6.4 V9.4 H7 M8 6.4 L10 9.4 M10 6.4 L8 9.4" stroke="#3a3a3a" stroke-width="0.7" fill="none"/></svg>
<svg class="a" style="left:250.5px;top:37.0px" width="11" height="10" viewBox="0 0 11 10"><path d="M5.5 0.8 L9.6 2.8 V6 L5.5 4.4 L1.4 6 V2.8 Z" fill="none" stroke="#3a3a3a" stroke-width="0.9"/><path d="M1 9.4 V6.4 L2.5 8 L4 6.4 V9.4 M5.5 6.4 V9.4 H7 M8 6.4 L10 9.4 M10 6.4 L8 9.4" stroke="#3a3a3a" stroke-width="0.7" fill="none"/></svg>
<svg class="a" style="left:265.0px;top:37.0px" width="11" height="10" viewBox="0 0 11 10"><path d="M5.5 0.8 L9.6 2.8 V6 L5.5 4.4 L1.4 6 V2.8 Z" fill="none" stroke="#3a3a3a" stroke-width="0.9"/><path d="M1 9.4 V6.4 L2.5 8 L4 6.4 V9.4 M5.5 6.4 V9.4 H7 M8 6.4 L10 9.4 M10 6.4 L8 9.4" stroke="#3a3a3a" stroke-width="0.7" fill="none"/></svg>
<div class="a" style="left:279.20000000000005px;top:36.0px;width:0.8px;height:12px;background:#A9B1C5;"></div>
<svg class="a" style="left:284.9px;top:37.0px" width="9" height="10" viewBox="0 0 9 10"><path d="M2.5 0.5 L6 6.5 M6.5 0.5 L3 6.5" stroke="#B4BACB" stroke-width="0.9"/><circle cx="2.5" cy="8" r="1.4" fill="none" stroke="#B4BACB" stroke-width="0.8"/><circle cx="6.5" cy="8" r="1.4" fill="none" stroke="#B4BACB" stroke-width="0.8"/></svg>
<svg class="a" style="left:298.7px;top:37.0px" width="10" height="10" viewBox="0 0 10 10"><rect x="3.4" y="0.8" width="5.6" height="6" fill="#D6DBE9" stroke="#3c3c3c" stroke-width="0.9"/><rect x="0.8" y="3.2" width="5.6" height="6" fill="#D6DBE9" stroke="#3c3c3c" stroke-width="0.9"/></svg>
<svg class="a" style="left:312.0px;top:37.0px" width="10" height="10" viewBox="0 0 10 10"><rect x="1.5" y="2.5" width="7" height="7" fill="none" stroke="#BCC2D2" stroke-width="0.9"/><rect x="3.4" y="0.8" width="3.2" height="2.4" fill="none" stroke="#BCC2D2" stroke-width="0.8"/><path d="M1.5 5.4 H8.5" stroke="#BCC2D2" stroke-width="0.6"/></svg>
<div class="a" style="left:327.1px;top:36.0px;width:0.8px;height:12px;background:#A9B1C5;"></div>
<svg class="a" style="left:332.0px;top:37.5px" width="10" height="9" viewBox="0 0 10 9"><path d="M1.6 1 V4.2 H4.8" fill="none" stroke="#A3AABD" stroke-width="1.1"/><path d="M2 4 C3.6 1.6 7.6 1.6 7.8 4.6 C7.9 6.2 6.8 7.4 5 8.4" fill="none" stroke="#A3AABD" stroke-width="1.2"/></svg>
<div class="a" style="left:346.8px;top:41.1px;width:0;height:0;border-top:2.3px solid #8f96a8;border-left:2.2px solid transparent;border-right:2.2px solid transparent"></div>
<svg class="a" style="left:355.0px;top:37.5px" width="10" height="9" viewBox="0 0 10 9"><path d="M8.4 1 V4.2 H5.2" fill="none" stroke="#B9BFD0" stroke-width="1.1"/><path d="M8 4 C6.4 1.6 2.4 1.6 2.2 4.6 C2.1 6.2 3.2 7.4 5 8.4" fill="none" stroke="#B9BFD0" stroke-width="1.2"/></svg>
<div class="a" style="left:369.8px;top:41.1px;width:0;height:0;border-top:2.3px solid #8f96a8;border-left:2.2px solid transparent;border-right:2.2px solid transparent"></div>
<div class="a" style="left:377.6px;top:36.0px;width:0.8px;height:12px;background:#A9B1C5;"></div>
<svg class="a" style="left:383.0px;top:37.0px" width="10" height="10" viewBox="0 0 10 10"><rect x="1" y="1" width="8" height="8" fill="none" stroke="#4a4a4a" stroke-width="0.9"/><path d="M1.5 8.5 L8.5 1.5" stroke="#4a4a4a" stroke-width="0.7"/><circle cx="3.6" cy="6.8" r="1.8" fill="#D6DBE9" stroke="#4a4a4a" stroke-width="0.7"/><path d="M2.6 3 H5" stroke="#4a4a4a" stroke-width="0.7"/></svg>
<div class="a" style="left:397.1px;top:36.0px;width:0.8px;height:12px;background:#A9B1C5;"></div>
<div class="a" style="left:408.40000000000003px;top:41.1px;width:0;height:0;border-top:2.3px solid #555;border-left:2.2px solid transparent;border-right:2.2px solid transparent"></div>
<div class="a" style="left:415.6px;top:36.0px;width:0.8px;height:12px;background:#A9B1C5;"></div>
<div class="a" style="left:418px;top:35.5px;width:15.5px;height:13px;background:#CDDCF6;"></div>
<svg class="a" style="left:419.5px;top:37.0px" width="12" height="10" viewBox="0 0 12 10"><path d="M3.5 1.5 L10.5 0.8 L11.2 5.2 L5.5 6 Z" fill="#F2A838"/><path d="M4.5 5 L2.2 8.6" stroke="#28457a" stroke-width="1.2"/><path d="M3 6.2 L5.8 7.4" stroke="#2B6CC4" stroke-width="0.9"/></svg>
<div class="a" style="left:436px;top:35.6px;width:119.6px;height:12.4px;background:#fff;"></div>
<div class="a" style="left:548.8px;top:41.1px;width:0;height:0;border-top:2.3px solid #1e1e1e;border-left:2.2px solid transparent;border-right:2.2px solid transparent"></div>
<div class="a" style="left:559.6px;top:36.0px;width:0.8px;height:12px;background:#8792ad;"></div>
<svg class="a" style="left:565.0px;top:37.0px" width="10" height="10" viewBox="0 0 10 10"><path d="M1 1.2 H9 V8.6 H5.4" fill="none" stroke="#3c3c3c" stroke-width="0.9"/><path d="M1 2.2 H9" stroke="#3c3c3c" stroke-width="1.4"/><path d="M1.5 5.2 L3 7 L1.5 8.8 M4.4 5 V9" stroke="#7B2C8C" stroke-width="1" fill="none"/></svg>
<svg class="a" style="left:579.0px;top:37.0px" width="10" height="10" viewBox="0 0 10 10"><path d="M1.2 8.8 L5.4 4.6" stroke="#2b2b2b" stroke-width="1.7" stroke-linecap="round"/><path d="M8.9 2.1 A2.4 2.4 0 1 1 6.6 0.9 L6 2.6 L7.3 3.8 Z" fill="#2b2b2b"/></svg>
<svg class="a" style="left:593.7px;top:37.5px" width="10" height="9" viewBox="0 0 10 9"><rect x="0.8" y="2.6" width="8.4" height="5.8" fill="#2b2b2b"/><path d="M3.4 2.6 V1 H6.6 V2.6" fill="none" stroke="#2b2b2b" stroke-width="0.9"/><path d="M0.8 5.2 H9.2" stroke="#D6DBE9" stroke-width="0.7"/></svg>
<svg class="a" style="left:608.0px;top:38.0px" width="10" height="8" viewBox="0 0 10 8"><rect x="0.7" y="0.7" width="8.6" height="6.6" fill="none" stroke="#4a4a4a" stroke-width="0.8"/><path d="M2.2 2.6 L3.6 4 L2.2 5.4" fill="none" stroke="#4a4a4a" stroke-width="0.7"/></svg>
<div class="a" style="left:621.5px;top:41.1px;width:0;height:0;border-top:2.3px solid #1e1e1e;border-left:2.2px solid transparent;border-right:2.2px solid transparent"></div>
<div class="a" style="left:630.9000000000001px;top:42.2px;width:3.6px;height:0.8px;background:#1e1e1e;"></div>
<div class="a" style="left:630.5px;top:43.9px;width:0;height:0;border-top:2.3px solid #1e1e1e;border-left:2.2px solid transparent;border-right:2.2px solid transparent"></div>
<div class="a" style="left:639px;top:36px;width:2px;height:12px;background:repeating-linear-gradient(180deg,#9AA3BA 0,#9AA3BA 1px,transparent 1px,transparent 2px);opacity:.8"></div>
<svg class="a" style="left:644.0px;top:36.5px" width="10" height="11" viewBox="0 0 10 11"><rect x="1" y="0.8" width="4.2" height="4" fill="#1A5296"/><rect x="2" y="0.8" width="2" height="1.4" fill="#D6DBE9"/><path d="M5.6 2 H9.2 V3.2 M7.4 2 V9.6 H1.6 V8" fill="none" stroke="#2b2b2b" stroke-width="1"/><path d="M1.6 6.4 H5" stroke="#1A5296" stroke-width="1"/></svg>
<div class="a" style="left:658.6px;top:36.0px;width:0.8px;height:12px;background:#A9B1C5;"></div>
<svg class="a" style="left:664.2px;top:39.5px" width="9" height="5" viewBox="0 0 9 5"><circle cx="6.5" cy="2.5" r="1.7" fill="none" stroke="#3c3c3c" stroke-width="1"/><path d="M0.6 2.5 H4.8 M1.4 2.5 V4 M2.8 2.5 V4" stroke="#3c3c3c" stroke-width="1"/></svg>
<div class="a" style="left:678.1px;top:36.0px;width:0.8px;height:12px;background:#A9B1C5;"></div>
<svg class="a" style="left:683.0px;top:37.0px" width="10" height="10" viewBox="0 0 10 10"><path d="M2.4 0.6 V4.4 M0.5 2.5 H4.3" stroke="#2E8B2E" stroke-width="1.1"/><rect x="5.2" y="0.8" width="4" height="2.4" fill="#3a3a3a"/><path d="M7.2 3.2 V8.4 H5.8" stroke="#3a3a3a" stroke-width="0.9" fill="none"/><rect x="1" y="6" width="4" height="3.2" fill="none" stroke="#3a3a3a" stroke-width="0.9"/></svg>
<svg class="a" style="left:697.5px;top:37.0px" width="10" height="10" viewBox="0 0 10 10"><rect x="3.4" y="0.8" width="5.6" height="8.4" fill="none" stroke="#4a4a4a" stroke-width="0.8"/><path d="M3.4 3 H9 M3.4 5.2 H9 M3.4 7.2 H9" stroke="#4a4a4a" stroke-width="0.6"/><path d="M0.6 4.4 L2.6 3 V5.8 Z" fill="#4a4a4a"/></svg>
<svg class="a" style="left:711.0px;top:38.0px" width="10" height="8" viewBox="0 0 10 8"><rect x="0.6" y="0.8" width="8.8" height="6.4" fill="none" stroke="#4a4a4a" stroke-width="0.8"/><path d="M2.2 3 H7.8 M2.2 5 H7.8" stroke="#888" stroke-width="0.8"/></svg>
<svg class="a" style="left:725.0px;top:37.0px" width="10" height="10" viewBox="0 0 10 10"><path d="M2.6 0.8 H6.4 L8.4 2.8 V8 H2.6 Z" fill="none" stroke="#4a4a4a" stroke-width="0.8"/><rect x="1" y="7" width="3" height="2.4" fill="#2b2b2b"/></svg>
<svg class="a" style="left:738.7px;top:37.5px" width="10" height="9" viewBox="0 0 10 9"><rect x="0.7" y="0.7" width="8.6" height="7.6" fill="none" stroke="#3a3a3a" stroke-width="0.9"/><path d="M0.7 2.6 H9.3" stroke="#3a3a3a" stroke-width="1.6"/><path d="M0.7 5.2 H9.3 M3.6 2.6 V8.3 M6.4 2.6 V8.3" stroke="#3a3a3a" stroke-width="0.6"/></svg>
<svg class="a" style="left:752.5px;top:37.0px" width="10" height="10" viewBox="0 0 10 10"><rect x="0.5" y="0.5" width="9" height="9" fill="#2b2b2b"/><rect x="1.4" y="2.4" width="7.2" height="6" fill="#E6B93C"/><path d="M2 8.4 L4 4 L5.6 7 L7 3.6 L8.4 8.4 Z" fill="#8a5a1a"/><rect x="1.4" y="1" width="3" height="1.4" fill="#4a7fd0"/></svg>
<div class="a" style="left:768.2px;top:42.2px;width:3.6px;height:0.8px;background:#1e1e1e;"></div>
<div class="a" style="left:767.8px;top:43.9px;width:0;height:0;border-top:2.3px solid #1e1e1e;border-left:2.2px solid transparent;border-right:2.2px solid transparent"></div>
<div class="a" style="left:6.3px;top:52.3px;width:2px;height:12px;background:repeating-linear-gradient(180deg,#9AA3BA 0,#9AA3BA 1px,transparent 1px,transparent 2px);opacity:.8"></div>
<svg class="a" style="left:14.8px;top:53.3px" width="8" height="10" viewBox="0 0 8 10"><path d="M2.4 0.6 V3 M5.6 0.6 V3 M1.4 3 H6.6 V5.4 L4 7.4 L1.4 5.4 Z M4 7.4 V9.6" fill="none" stroke="#B9C0CF" stroke-width="1"/></svg>
<svg class="a" style="left:29.0px;top:53.3px" width="8" height="10" viewBox="0 0 8 10"><path d="M2.4 0.6 V3 M5.6 0.6 V3 M1.4 3 H6.6 V5.4 L4 7.4 L1.4 5.4 Z M4 7.4 V9.6" fill="none" stroke="#B9C0CF" stroke-width="1"/></svg>
<div class="a" style="left:42.6px;top:52.3px;width:0.8px;height:12px;background:#A9B1C5;"></div>
<div class="a" style="left:48.7px;top:51.6px;width:103px;height:12.8px;background:#DEE2ED;"></div>
<div class="a" style="left:145.3px;top:57.4px;width:0;height:0;border-top:2.3px solid #A9B0C2;border-left:2.2px solid transparent;border-right:2.2px solid transparent"></div>
<div class="a" style="left:155.6px;top:52.3px;width:0.8px;height:12px;background:#A9B1C5;"></div>
<svg class="a" style="left:162.1px;top:54.3px" width="7" height="8" viewBox="0 0 7 8"><path d="M1 0.8 L6 4 L1 7.2 Z" fill="none" stroke="#B9C0CF" stroke-width="0.9"/></svg>
<div class="a" style="left:209.5px;top:56.0px;width:4.6px;height:4.6px;background:#B9C0CF;"></div>
<svg class="a" style="left:221.6px;top:54.8px" width="8" height="7" viewBox="0 0 8 7"><path d="M0.8 3.8 L3 6 L7.2 0.8" fill="none" stroke="#B9C0CF" stroke-width="1.2"/></svg>
<svg class="a" style="left:232.5px;top:53.3px" width="10" height="10" viewBox="0 0 10 10"><rect x="1" y="1.4" width="8" height="7.2" fill="none" stroke="#B9C0CF" stroke-width="0.9"/><path d="M1 3.6 H9 M4 1.4 V8.6" stroke="#B9C0CF" stroke-width="0.7"/></svg>
<svg class="a" style="left:250.0px;top:53.3px" width="10" height="10" viewBox="0 0 10 10"><path d="M1 2 H6 V8 H1 Z M6 3.4 H9 V8 H6" fill="none" stroke="#B9C0CF" stroke-width="0.9"/><path d="M1 4.6 H6" stroke="#B9C0CF" stroke-width="0.7"/></svg>
<svg class="a" style="left:263.7px;top:53.3px" width="10" height="10" viewBox="0 0 10 10"><path d="M1.4 1 V9 M1.4 2 H8 L6.4 4 L8 6 H1.4" fill="none" stroke="#B9C0CF" stroke-width="0.9"/></svg>
<div class="a" style="left:277.1px;top:52.3px;width:0.8px;height:12px;background:#A9B1C5;"></div>
<svg class="a" style="left:282.5px;top:53.3px" width="10" height="10" viewBox="0 0 10 10"><path d="M1.4 1 V9 M1.4 2 H8 L6.4 4 L8 6 H1.4" fill="none" stroke="#B9C0CF" stroke-width="0.9"/></svg>
<svg class="a" style="left:296.2px;top:53.3px" width="10" height="10" viewBox="0 0 10 10"><rect x="1" y="1.4" width="8" height="7.2" fill="none" stroke="#B9C0CF" stroke-width="0.9"/><path d="M1 3.6 H9 M4 1.4 V8.6" stroke="#B9C0CF" stroke-width="0.7"/></svg>
<svg class="a" style="left:310.6px;top:53.3px" width="10" height="10" viewBox="0 0 10 10"><path d="M1 2 H6 V8 H1 Z M6 3.4 H9 V8 H6" fill="none" stroke="#B9C0CF" stroke-width="0.9"/><path d="M1 4.6 H6" stroke="#B9C0CF" stroke-width="0.7"/></svg>
<div class="a" style="left:325.20000000000005px;top:52.3px;width:0.8px;height:12px;background:#A9B1C5;"></div>
<svg class="a" style="left:330.0px;top:53.3px" width="10" height="10" viewBox="0 0 10 10"><rect x="1" y="1.4" width="8" height="7.2" fill="none" stroke="#B9C0CF" stroke-width="0.9"/><path d="M1 3.6 H9 M4 1.4 V8.6" stroke="#B9C0CF" stroke-width="0.7"/></svg>
<svg class="a" style="left:343.7px;top:53.3px" width="10" height="10" viewBox="0 0 10 10"><path d="M1 2 H6 V8 H1 Z M6 3.4 H9 V8 H6" fill="none" stroke="#B9C0CF" stroke-width="0.9"/><path d="M1 4.6 H6" stroke="#B9C0CF" stroke-width="0.7"/></svg>
<svg class="a" style="left:357.5px;top:53.3px" width="10" height="10" viewBox="0 0 10 10"><path d="M1.4 1 V9 M1.4 2 H8 L6.4 4 L8 6 H1.4" fill="none" stroke="#B9C0CF" stroke-width="0.9"/></svg>
<div class="a" style="left:371.6px;top:52.3px;width:0.8px;height:12px;background:#A9B1C5;"></div>
<svg class="a" style="left:377.5px;top:53.3px" width="10" height="10" viewBox="0 0 10 10"><path d="M1 2 H6 V8 H1 Z M6 3.4 H9 V8 H6" fill="none" stroke="#B9C0CF" stroke-width="0.9"/><path d="M1 4.6 H6" stroke="#B9C0CF" stroke-width="0.7"/></svg>
<svg class="a" style="left:390.6px;top:53.3px" width="10" height="10" viewBox="0 0 10 10"><path d="M1.4 1 V9 M1.4 2 H8 L6.4 4 L8 6 H1.4" fill="none" stroke="#B9C0CF" stroke-width="0.9"/></svg>
<div class="a" style="left:405.20000000000005px;top:52.3px;width:0.8px;height:12px;background:#A9B1C5;"></div>
<svg class="a" style="left:412.0px;top:54.3px" width="10" height="8" viewBox="0 0 10 8"><path d="M0.6 4 H9.4 M2.4 1.6 H7.6 M2.4 6.4 H7.6" stroke="#B9C0CF" stroke-width="0.8"/></svg>
<svg class="a" style="left:423.7px;top:54.3px" width="10" height="8" viewBox="0 0 10 8"><path d="M0.6 4 H9.4 M2.4 1.6 H7.6 M2.4 6.4 H7.6" stroke="#B9C0CF" stroke-width="0.8"/></svg>
<div class="a" style="left:439.0px;top:52.3px;width:0.8px;height:12px;background:#A9B1C5;"></div>
<svg class="a" style="left:443.7px;top:54.3px" width="10" height="8" viewBox="0 0 10 8"><path d="M2 2.4 L4.4 0.8 V4 Z M4 2.4 H7 C9 2.4 9 6.4 6.4 6.6" fill="none" stroke="#B9C0CF" stroke-width="0.9"/></svg>
<div class="a" style="left:458.8px;top:59.0px;width:3.6px;height:0.8px;background:#1e1e1e;"></div>
<div class="a" style="left:458.40000000000003px;top:60.699999999999996px;width:0;height:0;border-top:2.3px solid #1e1e1e;border-left:2.2px solid transparent;border-right:2.2px solid transparent"></div>
<div class="a" style="left:788px;top:0px;width:188px;height:2.2px;background:linear-gradient(180deg,#BFC3CE,#D0D5E2);border-radius:0 0 2px 2px"></div>
<div class="a" style="left:803.8px;top:2px;width:129.4px;height:13.2px;background:#fff;"></div>
<svg class="a" style="left:923.4px;top:4.4px" width="8" height="8" viewBox="0 0 8 8"><circle cx="4.8" cy="3.2" r="2.3" fill="none" stroke="#3c3c3c" stroke-width="0.9"/><path d="M3.2 4.8 L0.8 7.2" stroke="#3c3c3c" stroke-width="1.1"/></svg>
<div class="a" style="left:942px;top:10.5px;width:5.4px;height:1.8px;background:#1e1e1e;"></div>
<svg class="a" style="left:963.0px;top:5.6px" width="8" height="8" viewBox="0 0 8 8"><rect x="2.4" y="0.9" width="4.6" height="4.2" fill="none" stroke="#1e1e1e" stroke-width="0.9"/><rect x="0.9" y="2.7" width="4.6" height="4.2" fill="#D6DBE9" stroke="#1e1e1e" stroke-width="0.9"/><path d="M0.9 3 H5.5" stroke="#1e1e1e" stroke-width="1.2"/></svg>
<svg class="a" style="left:985.2px;top:5.699999999999999px" width="7" height="7" viewBox="0 0 7 7"><path d="M1 1 L6 6 M6 1 L1 6" stroke="#1e1e1e" stroke-width="1.1"/></svg>
<div class="a" style="left:135.8px;top:77.1px;width:0;height:0;border-top:2.3px solid #E4E8F2;border-left:2.2px solid transparent;border-right:2.2px solid transparent"></div>
<svg class="a" style="left:146.0px;top:74.0px" width="6" height="8" viewBox="0 0 6 8"><path d="M1.6 0.8 H4.4 V4.4 H1.6 Z M0.6 4.6 H5.4 M3 4.6 V7.4" fill="none" stroke="#E4E8F2" stroke-width="0.8"/></svg>
<svg class="a" style="left:157.1px;top:74.5px" width="7" height="7" viewBox="0 0 7 7"><path d="M1 1 L6 6 M6 1 L1 6" stroke="#E4E8F2" stroke-width="1.05"/></svg>
<div class="a" style="left:27.2px;top:92.5px;width:0;height:0;border-top:2.3px solid #1e1e1e;border-left:2.2px solid transparent;border-right:2.2px solid transparent"></div>
<svg class="a" style="left:36.5px;top:88.4px" width="9" height="10" viewBox="0 0 9 10"><path d="M3.4 0.6 V3 M6.6 0.6 V3" stroke="#2b2b2b" stroke-width="1"/><path d="M2.2 3 H7.8 V5.2 L5.8 7 V9.6 H4.2 V7 L2.2 5.2 Z" fill="#2b2b2b"/></svg>
<svg class="a" style="left:52.1px;top:88.4px" width="9" height="10" viewBox="0 0 9 10"><path d="M3.4 0.6 V3 M6.6 0.6 V3" stroke="#2b2b2b" stroke-width="1"/><path d="M2.2 3 H7.8 V5.2 L5.8 7 V9.6 H4.2 V7 L2.2 5.2 Z" fill="#2b2b2b"/><path d="M0.2 0.4 L2 2.2 M2 0.4 L0.2 2.2" stroke="#C0392B" stroke-width="0.7"/></svg>
<div class="a" style="left:66.8px;top:91.2px;width:4.4px;height:4.4px;background:#B3BACB;"></div>
<svg class="a" style="left:79.0px;top:88.9px" width="8" height="9" viewBox="0 0 8 9"><path d="M0.6 1 H7.4 L4.8 4.4 V8.4 L3.2 7.4 V4.4 Z" fill="#2b2b2b"/></svg>
<svg class="a" style="left:92.9px;top:88.9px" width="9" height="9" viewBox="0 0 9 9"><path d="M7.4 3 A3.3 3.3 0 1 0 7.8 5.6" fill="none" stroke="#1C64B4" stroke-width="1.3"/><path d="M8.6 0.8 V3.8 H5.6 Z" fill="#1C64B4"/></svg>
<svg class="a" style="left:107.5px;top:89.9px" width="9" height="7" viewBox="0 0 9 7"><path d="M0.4 3.8 H2.2 L3.2 1.2 L4.6 6.2 L5.8 2.4 L6.6 3.8 H8.6" fill="none" stroke="#2b2b2b" stroke-width="0.8"/></svg>
<svg class="a" style="left:283.4px;top:75.5px" width="6" height="5" viewBox="0 0 6 5"><path d="M2.6 0.8 V4.2 M2.6 1.4 H5 V3.6 H2.6 M0.4 2.5 H2.6" fill="none" stroke="#6b6540" stroke-width="0.7"/></svg>
<svg class="a" style="left:295.1px;top:74.4px" width="7" height="7" viewBox="0 0 7 7"><path d="M0.6 0.6 L6.4 6.4 M6.4 0.6 L0.6 6.4" stroke="#2a2a1a" stroke-width="0.85"/></svg>
<div class="a" style="left:989.4px;top:77px;width:0;height:0;border-top:2.4px solid #E4E8F2;border-left:2.4px solid transparent;border-right:2.4px solid transparent"></div>
<div class="a" style="left:184.4px;top:347.6px;width:11.6px;height:12.4px;background:#E3ECF8;border:0.7px solid #6E9BD2"></div>
<svg class="a" style="left:186.2px;top:349.3px" width="8" height="9" viewBox="0 0 8 9"><path d="M0.8 1.2 H2.6 V3 H0.8 Z M0.8 5.4 H2.6 V7.2 H0.8 Z" fill="none" stroke="#444" stroke-width="0.6"/><path d="M4 1.4 H7 M4 2.8 H7 M4 5.6 H7 M4 7 H7" stroke="#777" stroke-width="0.6"/></svg>
<svg class="a" style="left:198.5px;top:348.8px" width="9" height="10" viewBox="0 0 9 10"><path d="M0.8 4 L2.2 0.8 L3.6 4 M1.3 3 H3.1" fill="none" stroke="#2B5CA8" stroke-width="0.7"/><path d="M0.9 5.6 H3.4 L0.9 9 H3.4" fill="none" stroke="#2B5CA8" stroke-width="0.7"/><path d="M6.4 0.8 V8.4 M5 6.8 L6.4 8.8 L7.8 6.8" fill="none" stroke="#222" stroke-width="0.9"/></svg>
<div class="a" style="left:211.2px;top:348.5px;width:0.7px;height:11px;background:#C5C3B3;"></div>
<svg class="a" style="left:212.7px;top:348.8px" width="11" height="10.6" viewBox="0 0 11 10.6"><rect x="0.4" y="0.4" width="10.2" height="9.8" fill="#D2D2CC" stroke="#C2C2BB" stroke-width="0.6"/><path d="M2 2.8 H9 M2 4.8 H9 M2 6.8 H9 M2 8.6 H9" stroke="#C0C0B9" stroke-width="0.8"/></svg>
<div class="a" style="left:192.7px;top:542px;width:23.3px;height:20px;background:rgba(255,255,255,0.55);"></div>
<div class="a" style="left:51.7px;top:560.2px;width:18.0px;height:1.8px;background:#37AEBB;"></div>
<div class="a" style="left:123.4px;top:560.2px;width:18.299999999999983px;height:1.8px;background:#37AEBB;"></div>
<div class="a" style="left:147px;top:560.2px;width:18px;height:1.8px;background:#37AEBB;"></div>
<div class="a" style="left:171px;top:560.2px;width:18.69999999999999px;height:1.8px;background:#37AEBB;"></div>
<div class="a" style="left:192.7px;top:560.2px;width:23.30000000000001px;height:1.8px;background:#37AEBB;"></div>
<div class="a" style="left:219px;top:560.2px;width:18px;height:1.8px;background:#37AEBB;"></div>
<div class="a" style="left:243px;top:560.2px;width:18.69999999999999px;height:1.8px;background:#37AEBB;"></div>
<div class="a" style="left:267px;top:560.2px;width:18px;height:1.8px;background:#37AEBB;"></div>
<svg class="a" style="left:5.699999999999999px;top:546.6px" width="11" height="10" viewBox="0 0 11 10"><path d="M0.3 1.6 L4.6 1 V4.7 H0.3 Z M5.3 0.9 L10.7 0.1 V4.7 H5.3 Z M0.3 5.3 H4.6 V9 L0.3 8.4 Z M5.3 5.3 H10.7 V9.9 L5.3 9.1 Z" fill="#0a0a0a"/></svg>
<svg class="a" style="left:28.5px;top:545.5px" width="12" height="12" viewBox="0 0 12 12"><circle cx="7.9" cy="4.6" r="3.2" fill="none" stroke="#2b2b2b" stroke-width="0.9"/><path d="M5.7 7 L1.6 11" stroke="#2b2b2b" stroke-width="1"/></svg>
<div class="a" style="left:55px;top:547px;width:10px;height:10px;border-radius:50%;background:conic-gradient(#E8453C,#F2B400,#7DC242,#1FA7A0,#2D7CE0,#8B4FD8,#E8453C)"></div>
<div class="a" style="left:58px;top:550px;width:4px;height:4px;border-radius:50%;background:#fff"></div>
<svg class="a" style="left:79.3px;top:546.9px" width="10" height="10" viewBox="0 0 10 10"><rect x="0.2" y="0.4" width="9.6" height="9.2" fill="#3A3A3C"/><path d="M5.4 6.2 L9 5 L8.2 8.6 L5.4 8.6 Z" fill="#E8E03A"/></svg>
<div class="a" style="left:103px;top:547px;width:10px;height:10px;border-radius:50%;background:radial-gradient(circle at 65% 60%,#DDEFF8 0,#DDEFF8 16%,#1B6FC2 22%,#1480C8 55%,#2FBF8F 100%)"></div>
<svg class="a" style="left:126.5px;top:546.5px" width="11" height="10" viewBox="0 0 11 10"><path d="M3 1 L10 0.6 L8.6 9 L1 9.4 Z" fill="#B9CBD0"/><path d="M3 1 L10 0.6 L9.8 2 L2.8 2.6 Z" fill="#6F9AA6"/><path d="M1 9.4 L8.6 9 L8.8 8 L1.3 8.4 Z" fill="#5C8A96"/></svg>
<svg class="a" style="left:150.5px;top:546.5px" width="11" height="10" viewBox="0 0 11 10"><path d="M0.6 1.6 H4.2 L5 2.6 H10.4 V5 H0.6 Z" fill="#E8B93C"/><rect x="0.6" y="3" width="9.8" height="5.6" fill="#F6D565"/><path d="M2 6 H9 V9.4 H7 V7.6 H4 V9.4 H2 Z" fill="#3E8FD8"/></svg>
<svg class="a" style="left:174.3px;top:546.8px" width="12" height="10" viewBox="0 0 12 10"><rect x="0.4" y="1" width="11.2" height="8.6" fill="#1565B8"/><rect x="0.4" y="1" width="11.2" height="1.6" fill="#0D4C92"/><path d="M5 3.8 L8.4 5.8 L5 7.8 Z" fill="#E6F1FB"/><rect x="1.4" y="3.4" width="2.4" height="5" fill="#2D86D8"/></svg>
<svg class="a" style="left:198.0px;top:546.0px" width="12" height="11" viewBox="0 0 12 11"><ellipse cx="4.6" cy="3.2" rx="3" ry="1.4" fill="#F1C73F"/><path d="M1.6 3.2 V7 A3 1.4 0 0 0 7.6 7 V3.2 Z" fill="#F4D353"/><path d="M5.4 6.4 L9.6 10 M9.8 5.6 L5.8 10" stroke="#2B6CC4" stroke-width="1.3"/><path d="M9 0.8 H11.2 V3 M0.8 8.4 V10.4 H3" stroke="#7aa0d8" stroke-width="0.7" fill="none"/></svg>
<svg class="a" style="left:223.0px;top:546.8px" width="10" height="10" viewBox="0 0 10 10"><rect x="0.2" y="0.2" width="9.6" height="9.6" rx="2" fill="#1E7FE0"/><path d="M3.4 2.4 L6.6 4.4 L6 7.6 L4.2 6 Z" fill="#fff"/></svg>
<div class="a" style="left:247px;top:547px;width:10px;height:10px;border-radius:50%;background:radial-gradient(circle at 45% 40%,#B9A7B4 0,#6A5564 35%,#3A2F3A 75%)"></div>
<svg class="a" style="left:270.0px;top:546.0px" width="10" height="11" viewBox="0 0 10 11"><path d="M5.4 0.6 C8.8 0.8 9.6 4.6 7.6 7.4 L6.6 5.6 C7.4 3.6 6.8 2.6 5 2.4 Z" fill="#D8402C"/><circle cx="4.4" cy="4.4" r="2.2" fill="#F2D9C8"/><path d="M1.6 10.2 C2 7.6 6.4 7.4 7.2 10.2 Z" fill="#2B78C8"/><path d="M2.2 3.4 C2.6 1.4 5 1 6.2 2.2" stroke="#D8402C" stroke-width="1.2" fill="none"/></svg>
<svg class="a" style="left:823.0px;top:549.9px" width="8" height="5" viewBox="0 0 8 5"><path d="M0.8 4.2 L4 1 L7.2 4.2" fill="none" stroke="#222" stroke-width="0.9"/></svg>
<svg class="a" style="left:837.3px;top:547.3px" width="11" height="9" viewBox="0 0 11 9"><rect x="0.5" y="0.5" width="9.4" height="7.6" fill="#FDFDFD" stroke="#444" stroke-width="0.9"/><path d="M3 2.4 H6.4 V5.6 H3 Z" fill="none" stroke="#555" stroke-width="0.8"/><circle cx="8.6" cy="7" r="1.9" fill="#F0A020"/></svg>
<svg class="a" style="left:852.7px;top:549.4px" width="11" height="6" viewBox="0 0 11 6"><rect x="1.4" y="0.6" width="8.8" height="4.8" fill="none" stroke="#222" stroke-width="0.9"/><rect x="2.2" y="1.4" width="4.6" height="3.2" fill="#222"/><rect x="0.2" y="1.8" width="1.2" height="2.4" fill="#222"/></svg>
<svg class="a" style="left:870.1px;top:548.4px" width="9" height="8" viewBox="0 0 9 8"><path d="M1 7.4 A6.4 6.4 0 0 1 7.6 0.8" fill="none" stroke="#555" stroke-width="0.8"/><path d="M3 7.4 A4.4 4.4 0 0 1 7.6 2.8" fill="none" stroke="#555" stroke-width="0.8"/><path d="M5 7.4 A2.4 2.4 0 0 1 7.6 4.8" fill="none" stroke="#555" stroke-width="0.8"/><circle cx="7.2" cy="7" r="0.8" fill="#555"/></svg>
<svg class="a" style="left:884.0px;top:548.4px" width="10" height="8" viewBox="0 0 10 8"><path d="M0.8 2.8 H2.6 L4.8 0.8 V7.2 L2.6 5.2 H0.8 Z" fill="none" stroke="#333" stroke-width="0.8"/><path d="M6.2 2.6 C7 3.4 7 4.6 6.2 5.4 M7.6 1.4 C9 2.8 9 5.2 7.6 6.6" fill="none" stroke="#888" stroke-width="0.7"/></svg>
<div class="t " id="t70" style="left:900.5px;top:546.4px;font-size:9px;color:#8c8c8c">英</div>
<svg class="a" style="left:917.5px;top:547.0px" width="11" height="10" viewBox="0 0 11 10"><path d="M1 1.6 L9.6 0.4 L10.4 8.2 L1.8 9.6 Z" fill="#F0602A"/><path d="M7.6 2.6 H4 V4.8 H7.2 V7.2 H3.4" fill="none" stroke="#fff" stroke-width="1.1"/></svg>
<div class="t " id="t71" style="left:958px;top:549.0px;font-size:5.6px;color:#B7B2B6">CSDN @nage24</div>
<svg class="a" style="left:972.7px;top:546.6px" width="12" height="10" viewBox="0 0 12 10"><path d="M0.8 0.8 H11.2 V7.2 H7.4 L6 8.8 L4.6 7.2 H0.8 Z" fill="none" stroke="#333" stroke-width="0.8"/></svg>
<div class="a" style="left:995.2px;top:544px;width:0.7px;height:16px;background:#CFC9CB;"></div>
</div></body></html>
